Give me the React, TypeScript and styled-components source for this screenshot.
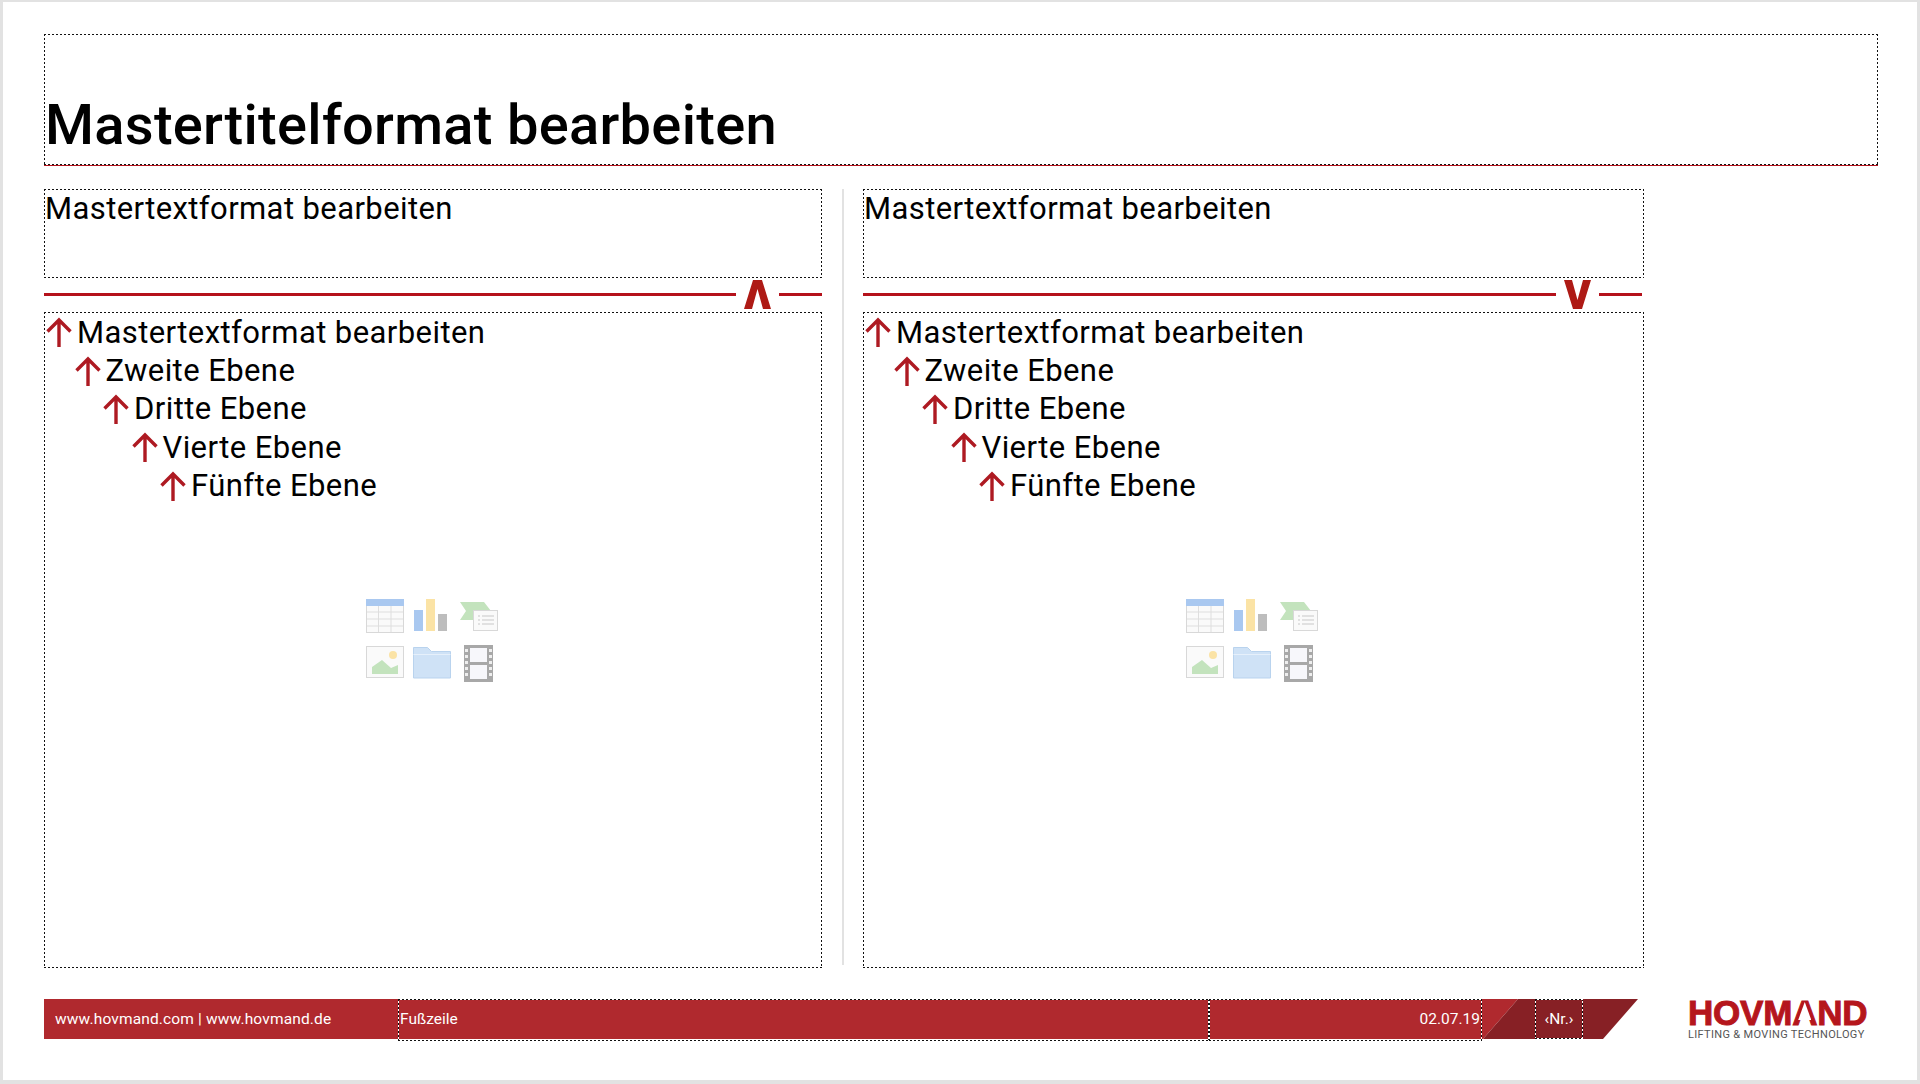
import { FC } from 'react';
import styled, { createGlobalStyle, css } from 'styled-components';

const levels = ['Mastertextformat bearbeiten', 'Zweite Ebene', 'Dritte Ebene', 'Vierte Ebene', 'Fünfte Ebene'];

const GlobalStyle = createGlobalStyle`
  html, body {
    margin: 0;
    padding: 0;
    background: #fff;
  }
  body {
    font-family: Roboto, "Liberation Sans", sans-serif;
    color: #000;
  }
`;

const dotted = (color: string, gap = 'transparent') => css`
  background-image:
    linear-gradient(to right, ${color} 2px, ${gap} 2px),
    linear-gradient(to right, ${color} 2px, ${gap} 2px),
    linear-gradient(to bottom, ${color} 2px, ${gap} 2px),
    linear-gradient(to bottom, ${color} 2px, ${gap} 2px);
  background-size: 4px 1px, 4px 1px, 1px 4px, 1px 4px;
  background-position: 0 0, 0 100%, 0 0, 100% 0;
  background-repeat: repeat-x, repeat-x, repeat-y, repeat-y;
`;

const Slide = styled.div`
  box-sizing: border-box;
  width: 1920px;
  height: 1084px;
  padding: 32px 39px 0 41px;
  border: solid #e2e2e2;
  border-width: 2px 3px 4px 3px;
  display: flex;
  flex-direction: column;
`;

const TitleBox = styled.div`
  ${dotted('#111')}
  box-sizing: border-box;
  height: 132px;
  display: flex;
  align-items: flex-end;
  padding: 0 0 10px 1px;
  border-bottom: 1px solid #b5121b;
`;

const Title = styled.h1`
  margin: 0;
  font-size: 56px;
  line-height: 60px;
  font-weight: 500;
  letter-spacing: 0.3px;
`;

const Columns = styled.div`
  display: grid;
  grid-template-columns: 778px 41px 781px;
  margin-top: 23px;
  height: 779px;
`;

const Column = styled.div`
  display: flex;
  flex-direction: column;
`;

const HeadBox = styled.div`
  ${dotted('#111')}
  box-sizing: border-box;
  height: 89px;
  padding: 1px 1px 0;
  font-size: 31px;
  line-height: 38px;
  letter-spacing: 0.4px;
`;

const RuleRow = styled.div`
  box-sizing: border-box;
  height: 34px;
  padding-bottom: 2px;
  display: flex;
  align-items: center;
  gap: 8px;
`;

const Rule = styled.div<{ $width: number }>`
  height: 3px;
  background: #b5121b;
  width: ${({ $width }) => $width}px;
`;

const Divider = styled.div`
  width: 2px;
  margin: 0 auto;
  height: 776px;
  background: #e2e2e2;
`;

const BodyBox = styled.div`
  ${dotted('#111')}
  flex: 1;
  box-sizing: border-box;
  padding-top: 1px;
  display: flex;
  flex-direction: column;
`;

const LevelList = styled.ul`
  list-style: none;
  margin: 0;
  padding: 0;
`;

const Level = styled.li<{ $level: number }>`
  display: flex;
  align-items: center;
  height: 38.4px;
  padding-left: ${({ $level }) => 2 + $level * 28.5}px;
  font-size: 31px;
  letter-spacing: 0.42px;
`;

const Bullet = styled.svg`
  width: 26px;
  height: 30px;
  margin-right: 5px;
  flex: none;
`;

const IconGrid = styled.div`
  display: grid;
  grid-template-columns: repeat(3, 38px);
  grid-auto-rows: 46px;
  column-gap: 9px;
  justify-content: center;
  margin-top: 94px;
  padding-right: 3px;
`;

const FooterRow = styled.div`
  display: flex;
  align-items: flex-start;
  margin-top: 31px;
`;

const Bar = styled.div`
  position: relative;
  width: 1595px;
  height: 40px;
  display: flex;
  color: #fff;
  font-size: 15.5px;
  line-height: 40px;
`;

const BarFill = styled.svg`
  position: absolute;
  inset: 0;
  width: 100%;
  height: 100%;
`;

const Links = styled.div`
  position: relative;
  width: 354px;
  padding-left: 11px;
  box-sizing: border-box;
  letter-spacing: 0.15px;
  white-space: nowrap;
`;

const FooterBox = styled.div<{ $width: number; $height?: number; $align?: string }>`
  ${dotted('#111', '#fff')}
  position: relative;
  box-sizing: border-box;
  width: ${({ $width }) => $width}px;
  height: ${({ $height }) => $height ?? 42}px;
  padding: 0 2px;
  text-align: ${({ $align }) => $align ?? 'left'};
`;

const Spacer = styled.div<{ $width: number }>`
  flex: none;
  width: ${({ $width }) => $width}px;
`;

const Logo = styled.div`
  margin-left: 49px;
  padding-top: 1px;
  width: 180px;
`;

const Wordmark = styled.div`
  font-family: "Liberation Sans", Arial, sans-serif;
  font-weight: 700;
  font-size: 35px;
  line-height: 26px;
  height: 28px;
  color: #b5161c;
  letter-spacing: -0.2px;
  -webkit-text-stroke: 1px #b5161c;
`;

const OpenA = styled.span`
  position: relative;
  &::after {
    content: '';
    position: absolute;
    left: 6px;
    right: 6px;
    top: 9px;
    height: 18px;
    background: #fff;
    clip-path: polygon(50% 0, 100% 100%, 0 100%);
  }
`;

const Tagline = styled.div`
  font-size: 11px;
  line-height: 14px;
  letter-spacing: 0.33px;
  color: #555;
  white-space: nowrap;
`;

const Caret = styled.svg`
  width: 27px;
  height: 29px;
  flex: none;
`;

const ArrowBullet: FC = () => (
  <Bullet viewBox="0 0 26 30">
    <path d="M13 30V3M1.500 14.500L13 3l11.500 11.500" fill="none" stroke="#ae1a22" strokeWidth="3.4" />
  </Bullet>
);

const PlaceholderIcons: FC = () => (
  <IconGrid>
    <svg width="38" height="36" viewBox="0 0 38 36">
      <rect x="0.5" y="0.5" width="37" height="33" fill="#fafafa" stroke="#d8d8d8" />
      <rect x="0" y="0" width="38" height="7" fill="#a9c8f0" />
      <path d="M12.500 7v26M25 7v26M1 13h36M1 20h36M1 27h36" stroke="#dedede" />
    </svg>
    <svg width="38" height="36" viewBox="0 0 38 36">
      <rect x="1" y="11" width="9" height="21" fill="#a9c8f0" />
      <rect x="13" y="0" width="9" height="32" fill="#fbe3a5" />
      <rect x="25" y="15" width="9" height="17" fill="#bdbdbd" />
    </svg>
    <svg width="38" height="36" viewBox="0 0 38 36">
      <path d="M0 3h24l7 9-6 9H0l6-9z" fill="#c3e3bd" />
      <rect x="13.500" y="11.500" width="24" height="20" fill="#fafafa" stroke="#d8d8d8" />
      <path d="M18 17h2M22 17h12M18 21h2M22 21h12M18 25h2M22 25h12" stroke="#c8c8c8" />
    </svg>
    <svg width="38" height="36" viewBox="0 0 38 36">
      <rect x="0.5" y="1.500" width="37" height="31" fill="#fafafa" stroke="#d8d8d8" />
      <circle cx="27" cy="10" r="4" fill="#fbe3a5" />
      <path d="M6 29v-7l10-7 9 8 7-3v9z" fill="#c3e3bd" />
    </svg>
    <svg width="38" height="36" viewBox="0 0 38 36">
      <path d="M0.500 33V2.500h14l4 4h19V33z" fill="#cfe2f6" stroke="#b9d3ee" />
      <path d="M0.500 9.500h37" stroke="#e6f0fb" />
    </svg>
    <svg width="38" height="38" viewBox="0 0 38 38">
      <rect x="4" y="0" width="29" height="37" fill="#a8a8a8" />
      <rect x="10" y="3" width="17" height="14" fill="#f7f7fb" />
      <rect x="10" y="20" width="17" height="14" fill="#f7f7fb" />
      <path d="M6.500 4v3M6.500 10v3M6.500 16v3M6.500 22v3M6.500 28v3M30.500 4v3M30.500 10v3M30.500 16v3M30.500 22v3M30.500 28v3" stroke="#eee" strokeWidth="3" />
    </svg>
  </IconGrid>
);

const ContentColumn: FC<{ caret: string; left: number; right: number }> = ({ caret, left, right }) => (
  <Column>
    <HeadBox>Mastertextformat bearbeiten</HeadBox>
    <RuleRow>
      <Rule $width={left} />
      <Caret viewBox="0 0 27 29">
        <path d={caret} fill="#ae1a15" />
      </Caret>
      <Rule $width={right} />
    </RuleRow>
    <BodyBox>
      <LevelList>
        {levels.map((text, i) => (
          <Level key={text} $level={i}>
            <ArrowBullet />
            {text}
          </Level>
        ))}
      </LevelList>
      <PlaceholderIcons />
    </BodyBox>
  </Column>
);

const App: FC = () => (
  <>
    <GlobalStyle />
    <Slide>
      <TitleBox>
        <Title>Mastertitelformat bearbeiten</Title>
      </TitleBox>
      <Columns>
        <ContentColumn caret="M9 0h9l9 29h-8L13.500 9 8 29H0z" left={692} right={43} />
        <Divider />
        <ContentColumn caret="M0 0h8l5.500 20L19 0h8l-9 29H9z" left={693} right={43} />
      </Columns>
      <FooterRow>
        <Bar>
          <BarFill viewBox="0 0 1595 40" preserveAspectRatio="none">
            <path d="M0 0h1474l-35 40H0z" fill="#b0292e" />
            <path d="M1474 0h120l-35 40h-120z" fill="#872025" />
          </BarFill>
          <Links>www.hovmand.com | www.hovmand.de</Links>
          <FooterBox $width={811}>Fußzeile</FooterBox>
          <FooterBox $width={273} $align="right">02.07.19</FooterBox>
          <Spacer $width={53} />
          <FooterBox $width={48} $height={40} $align="center">‹Nr.›</FooterBox>
        </Bar>
        <Logo>
          <Wordmark>
            HOVM<OpenA>A</OpenA>ND
          </Wordmark>
          <Tagline>LIFTING &amp; MOVING TECHNOLOGY</Tagline>
        </Logo>
      </FooterRow>
    </Slide>
  </>
);

export default App;
